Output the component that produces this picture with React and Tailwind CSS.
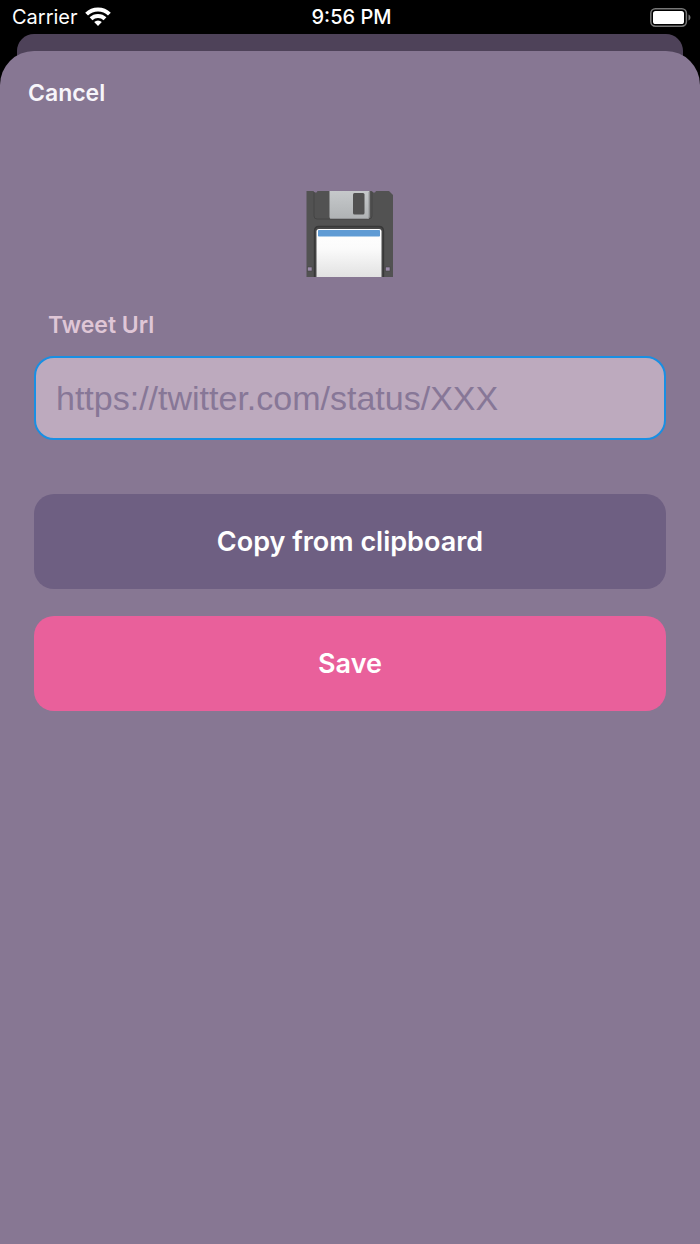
import { useState } from 'react';

export default function App() {
  const [url, setUrl] = useState('');

  const pasteUrl = async () => {
    try {
      setUrl(await navigator.clipboard.readText());
    } catch (err) {
      console.error(err);
    }
  };

  return (
    <div className="min-h-screen flex flex-col bg-black font-['Inter',sans-serif]">
      <StatusBar />

      {/* sheet underneath the modal */}
      <div className="mx-[17px] h-[50px] shrink-0 rounded-t-[17px] bg-[#4e4259]" />

      {/* ================= MODAL ================= */}
      <main className="relative -mt-[33px] flex-1 rounded-t-[34px] bg-[#877793] px-[34px] pt-6">
        <button
          type="button"
          onClick={() => setUrl('')}
          className="-ml-[6px] block text-[23px] leading-9 font-semibold text-[#f7f5fa]"
        >
          Cancel
        </button>

        <FloppyDisk />

        <form onSubmit={e => e.preventDefault()} className="flex flex-col">
          <label htmlFor="tweet-url" className="ml-[14px] mt-[31px] text-[23px] leading-8 font-semibold text-[#dfc6d6]">
            Tweet Url
          </label>
          <input
            id="tweet-url"
            type="text"
            value={url}
            onChange={e => setUrl(e.target.value)}
            placeholder="https://twitter.com/status/XXX"
            className="mt-[15px] h-[84px] w-full rounded-[20px] border-2 border-[#198fe3] bg-[#bdaabe] px-5 font-['Liberation_Sans',sans-serif] text-[34px] text-[#6c5d80] outline-none placeholder:text-[#877797]"
          />
          <button
            type="button"
            onClick={pasteUrl}
            className="mt-[54px] h-[95px] rounded-[20px] bg-[#6e5f82] pt-0.5 text-[27px] font-semibold text-white"
          >
            Copy from clipboard
          </button>
          <button
            type="submit"
            className="mt-[27px] h-[95px] rounded-[20px] bg-[#e9609b] pt-0.5 text-[27px] font-semibold text-white"
          >
            Save
          </button>
        </form>
      </main>
    </div>
  );
}

/* ================= HELPERS ================= */

function StatusBar() {
  return (
    <header className="grid h-[34px] shrink-0 grid-cols-3 items-center pl-3 pr-[9px] text-xl text-white">
      <div className="flex items-center gap-[7px]">
        <span>Carrier</span>
        <svg width="26" height="20" viewBox="0 0 26 20" aria-label="Wi-Fi">
          <g fill="none" stroke="#fff" strokeWidth="4">
            <path d="M1.6 7.2a16.2 16.2 0 0 1 22.800 0" />
            <path d="M6 11.800a10 10 0 0 1 14 0" />
          </g>
          <path d="M13 19l-3.800-3.900a5.400 5.400 0 0 1 7.600 0z" fill="#fff" />
        </svg>
      </div>
      <span className="text-center font-medium">9:56 PM</span>
      <svg className="justify-self-end" width="41" height="19" viewBox="0 0 41 19" aria-label="Battery full">
        <rect x="0.8" y="0.8" width="35.6" height="17.4" rx="4.6" fill="none" stroke="#777" strokeWidth="1.5" />
        <rect x="3" y="3" width="31" height="13" rx="2.6" fill="#fff" />
        <path d="M38.5 6.5c2.6 1 2.6 5 0 6z" fill="#777" />
      </svg>
    </header>
  );
}

function FloppyDisk() {
  return (
    <svg className="mx-auto mt-20 block" width="88" height="87" viewBox="0 0 88 87" aria-label="Floppy disk">
      <defs>
        <linearGradient id="shutter" x1="0" y1="0" x2="0" y2="1">
          <stop offset="0" stopColor="#c6c9cb" />
          <stop offset="1" stopColor="#afb2b4" />
        </linearGradient>
        <linearGradient id="paper" x1="0" y1="0" x2="0" y2="1">
          <stop offset="0" stopColor="#fff" />
          <stop offset="0.4" stopColor="#fbfbfb" />
          <stop offset="1" stopColor="#e2e2e2" />
        </linearGradient>
      </defs>
      {/* body */}
      <path d="M0.500 0h7l1 1.500h2l1-1.500h54.500l1 1.500h2l1-1.500h13l4 4v82H0.500z" fill="#525252" />
      <path d="M8 1v24q0 3 3 3h52q3 0 3-3V1" fill="none" stroke="#444" strokeWidth="1" />
      {/* metal shutter */}
      <path d="M23.500 0H63.500v26q0 2-2 2h-36q-2 0-2-2z" fill="url(#shutter)" />
      <path d="M63 1v25q0 1.500-1.500 1.500H25" fill="none" stroke="#8b8d8f" strokeWidth="0.8" />
      <rect x="47" y="2" width="11.5" height="21.500" rx="1.5" fill="#515151" />
      {/* label */}
      <path d="M8.500 86V40q0-4.500 4.500-4.500h60q4.500 0 4.500 4.500v46" fill="#484848" stroke="#383838" strokeWidth="1.3" />
      <path d="M10.500 86V40.500q0-2.500 2.500-2.500h60q2.500 0 2.500 2.500V86z" fill="url(#paper)" />
      <rect x="12" y="39" width="62" height="6.500" rx="0.8" fill="#5f9bd4" />
      {/* write-protect holes */}
      <rect x="1.500" y="76" width="4.500" height="4" fill="#9a8ba8" stroke="#444" strokeWidth="0.6" />
      <rect x="79.500" y="76" width="4.500" height="4" fill="#9a8ba8" stroke="#444" strokeWidth="0.6" />
    </svg>
  );
}
